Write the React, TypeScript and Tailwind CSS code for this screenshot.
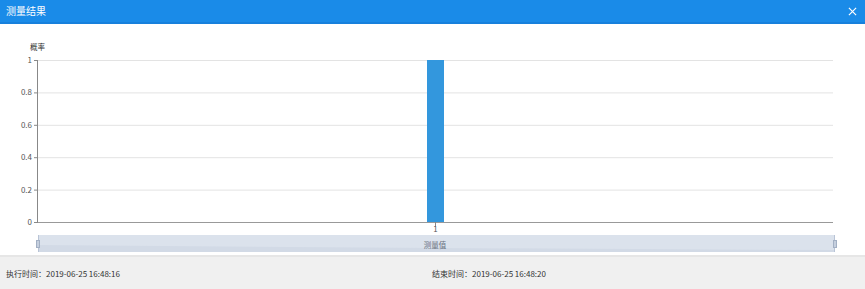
import React from "react";

const font = '"Noto Sans CJK SC", "Noto Sans", sans-serif';

export default function App() {
  const top = 60;
  const bottom = 222;
  const left = 38;
  const right = 833;
  const ticks = [1, 0.8, 0.6, 0.4, 0.2, 0];
  const yOf = (v: number) => bottom - (bottom - top) * v;
  const oy = 24;
  return (
    <div className="w-[865px] h-[289px] bg-white flex flex-col overflow-hidden" style={{ fontFamily: font }}>
      <div className="h-[24px] bg-[#1a8be8] border-b-2 border-[#1780dc] flex items-center justify-between pl-[6px] pr-[8px] shrink-0">
        <span className="text-white text-[10px] leading-none">测量结果</span>
        <svg width="9" height="9" viewBox="0 0 10 10">
          <path d="M1 1L9 9M9 1L1 9" stroke="#fff" strokeWidth="1.3" />
        </svg>
      </div>
      <div className="h-[231px] shrink-0">
        <svg width="865" height="231" viewBox={`0 ${oy} 865 231`} style={{ fontFamily: font }}>
          <text x="30" y="50" fontSize="7.5" fill="#333">概率</text>
          {ticks.map((t) => (
            <g key={t}>
              {t !== 0 && <line x1={left} x2={right} y1={yOf(t) + 0.5} y2={yOf(t) + 0.5} stroke="#e3e3e3" strokeWidth="1" />}
              <line x1={left - 4} x2={left} y1={yOf(t) + 0.5} y2={yOf(t) + 0.5} stroke="#888" strokeWidth="1" />
              <text x={left - 6} y={yOf(t) + 3} fontSize="8" fill="#555" textAnchor="end">{t}</text>
            </g>
          ))}
          <rect x="427" y={top} width="17" height={bottom - top} fill="#3397dd" />
          <line x1={left - 0.5} x2={left - 0.5} y1={top} y2={bottom + 1} stroke="#888" strokeWidth="1" />
          <line x1={left} x2={right} y1={bottom + 0.5} y2={bottom + 0.5} stroke="#999" strokeWidth="1.2" />
          <line x1="435.5" x2="435.5" y1={bottom} y2={bottom + 4} stroke="#888" strokeWidth="1" />
          <text x="435.5" y="232" fontSize="8" fill="#555" textAnchor="middle">1</text>
          <rect x="38" y="235" width="797" height="17" fill="#dbe2ec" />
          <path d="M38 245 L435 248 L835 250 L835 252 L38 252 Z" fill="#d2dae6" />
          <line x1="38.5" x2="38.5" y1="235" y2="252" stroke="#b9c4d6" strokeWidth="1" />
          <line x1="834.5" x2="834.5" y1="235" y2="252" stroke="#b9c4d6" strokeWidth="1" />
          <rect x="36.5" y="240.5" width="3" height="7" fill="#c5cfde" stroke="#a3b0c4" strokeWidth="1" />
          <rect x="833.5" y="240.5" width="3" height="7" fill="#c5cfde" stroke="#a3b0c4" strokeWidth="1" />
          <text x="435" y="248" fontSize="7.5" fill="#6b7280" textAnchor="middle">测量值</text>
        </svg>
      </div>
      <div className="flex-1 bg-[#f0f0f0] border-t-2 border-[#e6e6e6] flex items-center text-[8px] text-[#333] pt-[2px]">
        <div className="w-[426px] pl-[6px]">执行时间：2019-06-25 16:48:16</div>
        <div className="pl-[6px]">结束时间：2019-06-25 16:48:20</div>
      </div>
    </div>
  );
}
